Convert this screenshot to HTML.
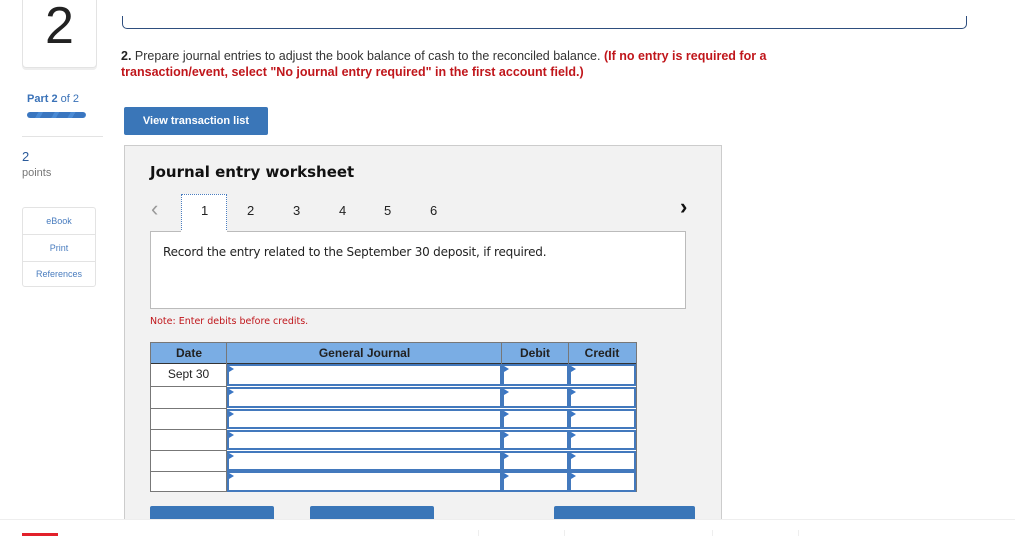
<!DOCTYPE html>
<html><head><style>
*{margin:0;padding:0;box-sizing:border-box}
body{width:1015px;height:536px;position:relative;overflow:hidden;background:#fff;font-family:"Liberation Sans",sans-serif;color:#222}
.a{position:absolute}
.btn{position:absolute;background:#3a76b8;border-radius:2px;color:#fff;font-size:11px;font-weight:bold;text-align:center}
.cell{position:absolute;background:#fff;border:2px solid #4379bd}
.cell:before{content:"";position:absolute;left:0;top:0;border-left:5px solid #3a76c4;border-top:3px solid transparent;border-bottom:3px solid transparent}
.gl{position:absolute;background:#777}
</style></head><body>
<!-- left column -->
<div class="a" style="left:22px;top:-6px;width:75px;height:74px;border:1px solid #e3e3e3;border-radius:4px;box-shadow:0 2px 0 #eee"></div>
<div class="a" style="left:22px;top:-10px;width:75px;text-align:center;font-size:52px;font-weight:300;color:#222;line-height:72px">2</div>
<div class="a" style="left:27px;top:93px;font-size:11px;color:#3a72b8"><b>Part 2</b> of 2</div>
<div class="a" style="left:27px;top:112px;width:59px;height:6px;border-radius:3px;background:repeating-linear-gradient(120deg,#3a76c0 0 10px,#4a8ad4 10px 14px)"></div>
<div class="a" style="left:22px;top:136px;width:81px;height:1px;background:#e3e3e3"></div>
<div class="a" style="left:22px;top:149px;font-size:13px;color:#2a5a9a">2</div>
<div class="a" style="left:22px;top:167px;font-size:11px;color:#777">points</div>
<div class="a" style="left:22px;top:207px;width:74px;height:80px;border:1px solid #e3e3e3;border-radius:3px;font-size:9px;color:#4a7dbf;text-align:center">
<div style="height:27px;line-height:26px;border-bottom:1px solid #e3e3e3">eBook</div>
<div style="height:27px;line-height:26px;border-bottom:1px solid #e3e3e3">Print</div>
<div style="height:24px;line-height:24px">References</div></div>
<!-- top -->
<div class="a" style="left:122px;top:16px;width:845px;height:13px;border:1px solid #2e4e7e;border-top:none;border-radius:0 0 5px 5px"></div>
<div class="a" style="left:121px;top:48px;width:735px;font-size:12.5px;line-height:16px;color:#333"><b style="color:#222">2.</b> Prepare journal entries to adjust the book balance of cash to the reconciled balance. <b style="color:#c0161b">(If no entry is required for a transaction/event, select "No journal entry required" in the first account field.)</b></div>
<div class="btn" style="left:124px;top:107px;width:144px;height:28px;line-height:28px">View transaction list</div>
<!-- panel -->
<div class="a" style="left:124px;top:145px;width:598px;height:380px;background:#f2f2f2;border:1px solid #ccc"></div>
<div class="a" style="left:150px;top:163px;font-weight:bold;color:#111;font-family:'DejaVu Sans',sans-serif;font-size:15px">Journal entry worksheet</div>
<div class="a" style="left:151px;top:196px;font-size:22px;color:#999">&lsaquo;</div>
<div class="a" style="left:680px;top:194px;font-size:22px;color:#111;font-weight:bold">&rsaquo;</div>
<div class="a" style="left:181px;top:194px;width:46px;height:40px;background:#fff;border:1px dotted #4a7dbf;border-bottom:none"></div>
<div class="a" style="left:150px;top:231px;width:536px;height:78px;background:#fff;border:1px solid #bbb"></div>
<div class="a" style="left:181px;top:231px;width:46px;height:2px;background:#fff"></div>
<div class="a" style="top:203px;left:0;font-size:13px;color:#222">
<span class="a" style="left:201px">1</span><span class="a" style="left:247px">2</span><span class="a" style="left:293px">3</span><span class="a" style="left:339px">4</span><span class="a" style="left:384px">5</span><span class="a" style="left:430px">6</span></div>
<div class="a" style="left:163px;top:245px;font-size:12px;font-family:'DejaVu Sans',sans-serif;letter-spacing:-0.2px;color:#222">Record the entry related to the September 30 deposit, if required.</div>
<div class="a" style="left:150px;top:316px;font-size:9.5px;color:#c0161b;font-family:'DejaVu Sans',sans-serif">Note: Enter debits before credits.</div>
<!-- table -->
<div class="a" style="left:150px;top:342px;width:487px;height:150px;background:#fff;border:1px solid #777"></div>
<div class="a" style="left:151px;top:343px;width:485px;height:21px;background:#7aade4;border-bottom:1px solid #333;font-size:12px;font-weight:bold;color:#222;line-height:20px">
<span class="a" style="left:0;width:76px;text-align:center">Date</span>
<span class="a" style="left:76px;width:275px;text-align:center">General Journal</span>
<span class="a" style="left:351px;width:66px;text-align:center">Debit</span>
<span class="a" style="left:417px;width:68px;text-align:center">Credit</span></div>
<div class="gl" style="left:226px;top:343px;width:1px;height:148px"></div>
<div class="gl" style="left:501px;top:343px;width:1px;height:21px"></div>
<div class="gl" style="left:568px;top:343px;width:1px;height:21px"></div>
<div class="a" style="left:151px;top:367px;width:75px;text-align:center;font-size:12px">Sept 30</div>
<div class="gl" style="left:151px;top:386px;width:75px;height:1px"></div>
<div class="gl" style="left:151px;top:408px;width:75px;height:1px"></div>
<div class="gl" style="left:151px;top:429px;width:75px;height:1px"></div>
<div class="gl" style="left:151px;top:450px;width:75px;height:1px"></div>
<div class="gl" style="left:151px;top:471px;width:75px;height:1px"></div>
<div class="cell" style="left:227px;top:364px;width:275px;height:22px"></div><div class="cell" style="left:502px;top:364px;width:67px;height:22px"></div><div class="cell" style="left:569px;top:364px;width:67px;height:22px"></div>
<div class="cell" style="left:227px;top:387px;width:275px;height:21px"></div><div class="cell" style="left:502px;top:387px;width:67px;height:21px"></div><div class="cell" style="left:569px;top:387px;width:67px;height:21px"></div>
<div class="cell" style="left:227px;top:409px;width:275px;height:20px"></div><div class="cell" style="left:502px;top:409px;width:67px;height:20px"></div><div class="cell" style="left:569px;top:409px;width:67px;height:20px"></div>
<div class="cell" style="left:227px;top:430px;width:275px;height:20px"></div><div class="cell" style="left:502px;top:430px;width:67px;height:20px"></div><div class="cell" style="left:569px;top:430px;width:67px;height:20px"></div>
<div class="cell" style="left:227px;top:451px;width:275px;height:20px"></div><div class="cell" style="left:502px;top:451px;width:67px;height:20px"></div><div class="cell" style="left:569px;top:451px;width:67px;height:20px"></div>
<div class="cell" style="left:227px;top:471px;width:275px;height:21px"></div><div class="cell" style="left:502px;top:471px;width:67px;height:21px"></div><div class="cell" style="left:569px;top:471px;width:67px;height:21px"></div>
<div class="btn" style="left:150px;top:506px;width:124px;height:20px"></div>
<div class="btn" style="left:310px;top:506px;width:124px;height:20px"></div>
<div class="btn" style="left:554px;top:506px;width:141px;height:20px"></div>
<!-- footer -->
<div class="a" style="left:0;top:519px;width:1015px;height:17px;background:#fff;border-top:1px solid #eee"></div>
<div class="a" style="left:22px;top:533px;width:36px;height:3px;background:#e2202a"></div>
<div class="a" style="left:478px;top:530px;width:1px;height:6px;background:#eee"></div>
<div class="a" style="left:564px;top:530px;width:1px;height:6px;background:#eee"></div>
<div class="a" style="left:712px;top:530px;width:1px;height:6px;background:#eee"></div>
<div class="a" style="left:798px;top:530px;width:1px;height:6px;background:#eee"></div>
</body></html>
